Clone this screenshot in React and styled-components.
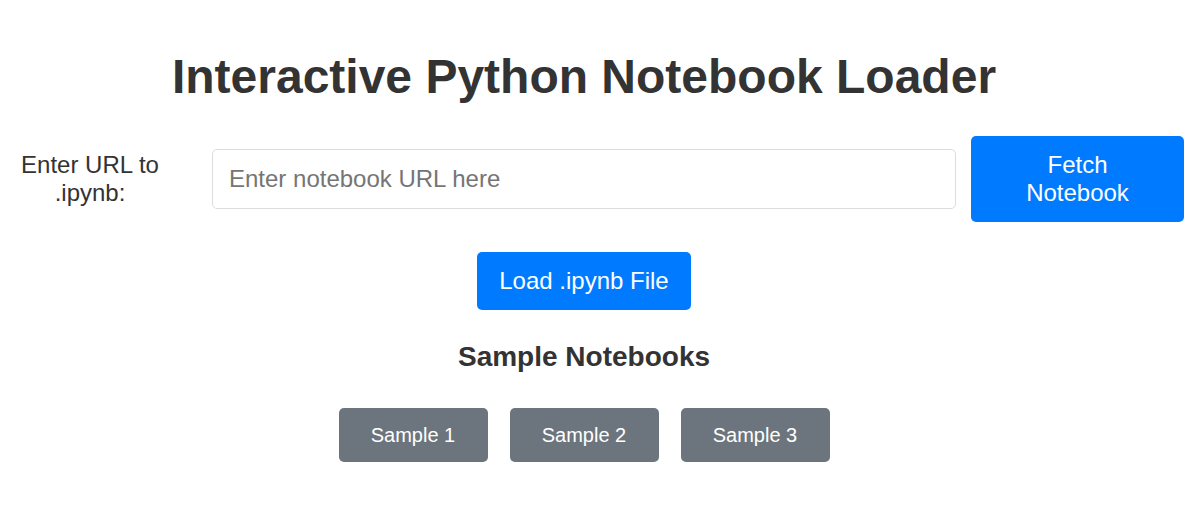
import styled, { createGlobalStyle } from 'styled-components'

const GlobalStyle = createGlobalStyle`
    body {
        margin: 0;
        background: #ffffff;
        font-family: "Liberation Sans", Arial, sans-serif;
        color: #333333;
    }
`

const Page = styled.div`
    width: 1168px;
    display: flex;
    flex-direction: column;
    align-items: center;
    padding-top: 49px;
`

const Title = styled.h1`
    margin: 0;
    font-size: 48px;
    font-weight: bold;
    color: #333333;
`

const UrlRow = styled.div`
    align-self: flex-start;
    width: 1164px;
    margin: 32px 0 0 20px;
    display: flex;
    align-items: center;
`

const UrlLabel = styled.label`
    flex: 0 0 140px;
    margin-right: 52px;
    font-size: 24px;
    text-align: center;
    color: #333333;
`

const UrlInput = styled.input`
    flex: 1;
    height: 60px;
    box-sizing: border-box;
    padding: 0 16px;
    border: 1px solid #dddddd;
    border-radius: 5px;
    font-family: "Liberation Sans", Arial, sans-serif;
    font-size: 24px;
    color: #333333;
    outline: none;

    &::placeholder {
        color: #757575;
    }
`

const Button = styled.button`
    box-sizing: border-box;
    border: none;
    border-radius: 5px;
    font-family: "Liberation Sans", Arial, sans-serif;
    color: #ffffff;
    background: ${props => (props.$variant === 'secondary' ? '#6c757d' : '#007bff')};
    cursor: pointer;
`

const FetchButton = styled(Button)`
    flex: 0 0 213px;
    height: 86px;
    margin-left: 15px;
    font-size: 24px;
    line-height: 28px;
    padding: 0 40px;
`

const LoadButton = styled(Button)`
    margin-top: 30px;
    width: 214px;
    height: 58px;
    font-size: 24px;
`

const SectionTitle = styled.h2`
    margin: 31px 0 0;
    font-size: 28px;
    font-weight: bold;
    color: #333333;
`

const SampleList = styled.div`
    margin-top: 35px;
    display: flex;
    gap: 22px;
`

const SampleButton = styled(Button)`
    width: 149px;
    height: 54px;
    font-size: 20px;
`

const samples = ['Sample 1', 'Sample 2', 'Sample 3']

function App() {
    return (
        <Page>
            <GlobalStyle />
            <Title>Interactive Python Notebook Loader</Title>

            <UrlRow>
                <UrlLabel htmlFor="nb-url">Enter URL to .ipynb:</UrlLabel>
                <UrlInput id="nb-url" type="text" placeholder="Enter notebook URL here" />
                <FetchButton>Fetch Notebook</FetchButton>
            </UrlRow>

            <LoadButton>Load .ipynb File</LoadButton>

            <SectionTitle>Sample Notebooks</SectionTitle>
            <SampleList>
                {samples.map(name => (
                    <SampleButton key={name} $variant="secondary">{name}</SampleButton>
                ))}
            </SampleList>
        </Page>
    )
}

export default App
